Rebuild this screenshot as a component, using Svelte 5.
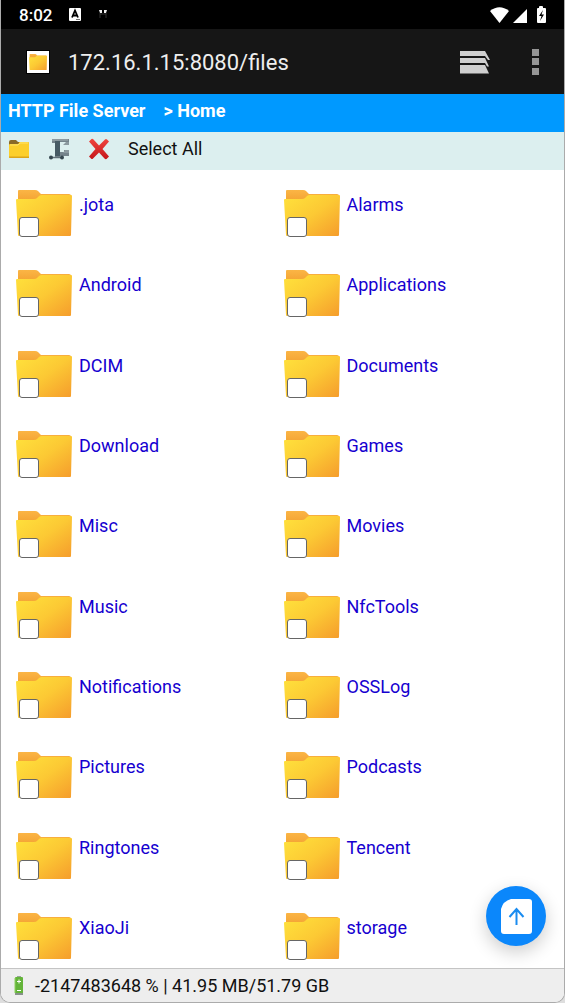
<script>
  const folders = [
    '.jota', 'Alarms', 'Android', 'Applications', 'DCIM', 'Documents', 'Download',
    'Games', 'Misc', 'Movies', 'Music', 'NfcTools', 'Notifications', 'OSSLog',
    'Pictures', 'Podcasts', 'Ringtones', 'Tencent', 'XiaoJi', 'storage'
  ];
  let selected = $state([]);

  function selectAll() {
    selected = selected.length === folders.length ? [] : [...folders];
  }
</script>

{#snippet folderShape()}
  <defs>
    <linearGradient id="folder-front" x1="0" y1="0" x2="1" y2="1">
      <stop offset="0" stop-color="#ffe23c" />
      <stop offset="0.5" stop-color="#fcc934" />
      <stop offset="1" stop-color="#f59c2c" />
    </linearGradient>
    <linearGradient id="folder-tab" x1="0" y1="0" x2="0" y2="1">
      <stop offset="0" stop-color="#fbb545" />
      <stop offset="1" stop-color="#f3a232" />
    </linearGradient>
  </defs>
  <path d="M2 1Q2 0 3 0H19Q21 0 22 1L25 4H53Q55 4 55 6V12H2Z" fill="url(#folder-tab)" />
  <path d="M0 10Q0 9 1 9H18Q20 9 21 8L23 6Q24 5 26 5H55Q56 5 56 6L55 45Q55 46 54 46H3Q2 46 2 45Z" fill="url(#folder-front)" />
{/snippet}

<div class="screen">
  <div class="status">
    <span class="clock">8:02</span>
    <svg class="app-a" width="12" height="13" viewBox="0 0 12 13">
      <rect width="12" height="13" rx="1" fill="#fff" />
      <path d="M3 9.500L6 2.500L9 9.500M4 7.500H8" fill="none" stroke="#000" stroke-width="1.800" />
      <path d="M7 11.500H11" stroke="#777" />
    </svg>
    <svg class="app-b" width="8" height="9" viewBox="0 0 8 9">
      <path d="M0 0H3V3H1ZM5 0H8L7 3H5Z" fill="#eee" />
      <path d="M1 3V8M7 3V8M1 4H7" stroke="#333" fill="none" />
    </svg>
    <svg class="signals" width="57" height="18" viewBox="0 0 57 18">
      <path d="M0 5Q9.500 -2.500 19 5L9.500 17Z" fill="#fff" />
      <path d="M37 3V17H23Z" fill="#fff" />
      <path d="M49 2V1Q49 0 50 0H52Q53 0 53 1V2H55Q56 2 56 3V16Q56 17 55 17H48Q47 17 47 16V3Q47 2 48 2Z" fill="#fff" />
      <path d="M53 4L49 10H51.500L50 15L54 8.500H51.500Z" fill="#000" />
    </svg>
  </div>

  <header class="browser">
    <span class="favicon">
      <svg width="18" height="16" viewBox="0 0 56 46" preserveAspectRatio="none">{@render folderShape()}</svg>
    </span>
    <span class="address">172.16.1.15:8080/files</span>
    <button class="bare" aria-label="Tabs">
      <svg width="30" height="24" viewBox="0 0 30 24">
        <path d="M0 1H25L30 10H28L25 6H0Z" fill="#cfcfcf" />
        <path d="M0 8H25L29 16.500H27L25 13H0Z" fill="#cfcfcf" />
        <path d="M0 15H25L29 23.500H0Z" fill="#cfcfcf" />
      </svg>
    </button>
    <button class="bare menu" aria-label="Menu">
      <svg width="7" height="26" viewBox="0 0 7 26" fill="#969696">
        <rect width="7" height="7" /><rect y="9" width="7" height="7" /><rect y="19" width="7" height="7" />
      </svg>
    </button>
  </header>

  <nav class="crumbs">
    <a href="#server">HTTP File Server</a>
    <a href="#home">&gt; Home</a>
  </nav>

  <div class="tools">
    <button class="bare" aria-label="New folder">
      <svg width="22" height="20" viewBox="0 0 22 20">
        <path d="M1 3Q1 1 3 1H8L10 3H19Q21 3 21 5V8H1Z" fill="#8b6a27" />
        <path d="M11 3H20V6H11Z" fill="#e9a91f" />
        <path d="M1 6Q1 5 2 5H10L12 3H20Q21 3 21 4V18Q21 19 20 19H2Q1 19 1 18Z" fill="#fccf2c" />
        <path d="M1 17.500H21V19H2Q1 19 1 18Z" fill="#dba51b" />
        <path d="M2 6H10L12 4H20" stroke="#ffe46a" fill="none" />
      </svg>
    </button>
    <button class="bare" aria-label="Compress">
      <svg width="22" height="22" viewBox="0 0 22 22">
        <path d="M4 1H21V5H18V4H12V14H16V12H21V18H12V19H7V5H4Z" fill="#74838b" />
        <path d="M15 7L18 4H21V7ZM15 15L17 12H21V15Z" fill="#8b999f" />
        <path d="M7 2H12V18H7Z" fill="#465a64" />
        <path d="M4 1H20V3H4Z" fill="#8b999f" />
        <path d="M3 19.500H14" stroke="#607078" stroke-width="1.500" />
        <circle cx="3" cy="19.500" r="2" fill="#35464f" />
        <circle cx="14" cy="19.500" r="2" fill="#35464f" />
      </svg>
    </button>
    <button class="bare" aria-label="Delete">
      <svg width="22" height="22" viewBox="0 0 22 22">
        <defs>
          <linearGradient id="cross" x1="0" y1="0" x2="0" y2="1">
            <stop offset="0" stop-color="#f0453f" /><stop offset="1" stop-color="#c4161a" />
          </linearGradient>
        </defs>
        <path d="M1 3.500L3.500 1Q4.500 0.500 5.500 1.500L11 7.500L17 1.500Q18 0.500 19 1.500L21 3.500L14.500 11L21 18.500L18.500 21Q17.500 21.500 16.500 20.500L11 14.500L5 20.500Q4 21.500 3 20.500L1 18.500L7.500 11Z" fill="url(#cross)" />
      </svg>
    </button>
    <button class="bare" onclick={selectAll}>Select All</button>
  </div>

  <main class="files">
    {#each folders as name, i}
      <div class="entry">
        <div class="thumb">
          <svg width="56" height="47" viewBox="0 0 56 47">{@render folderShape()}</svg>
          <input type="checkbox" value={name} bind:group={selected} aria-labelledby="name-{i}" />
        </div>
        <a id="name-{i}" href="#{name}">{name}</a>
      </div>
    {/each}
  </main>

  <footer>
    <svg width="10" height="19" viewBox="0 0 10 19">
      <path d="M3 0H7V2H3Z" fill="#9aa39a" />
      <rect x="1" y="1" width="8" height="17" rx="1" fill="#64b43a" />
      <path d="M1 2V17" stroke="#8fd25f" />
      <path d="M1 18H9" stroke="#87918a" stroke-width="2" />
      <path d="M3 5.500H7M5 3.500V7.500M3 14.500H7" stroke="#fff" />
    </svg>
    <span>-2147483648 % | 41.95 MB/51.79 GB</span>
  </footer>

  <button class="upload" aria-label="Upload">
    <svg width="31" height="35" viewBox="0 0 31 35">
      <path d="M10 0H28Q31 0 31 3V32Q31 35 28 35H3Q0 35 0 32V10Q2 2 10 0Z" fill="#fff" />
      <path d="M15.500 26V10M8.500 18L15.500 10L22.500 18" fill="none" stroke="#1a8cf0" stroke-width="2" />
    </svg>
  </button>
</div>

<style>
  :global(body) {
    background: #dedede;
  }
  .screen {
    box-sizing: border-box;
    min-height: 100vh;
    display: flex;
    flex-direction: column;
    border: 1px solid #ababab;
    border-top: 0;
    border-radius: 0 0 10px 10px;
    overflow: hidden;
    background: #fff;
    color: #111;
    font: 18px/24px Roboto, sans-serif;
  }
  a {
    text-decoration: none;
  }
  svg {
    display: block;
    flex: none;
  }
  .bare {
    padding: 0;
    border: 0;
    background: none;
    font: inherit;
    color: inherit;
    cursor: pointer;
  }
  .status {
    height: 29px;
    display: flex;
    align-items: center;
    padding: 0 17px 0 18px;
    background: #000;
    color: #fff;
  }
  .clock {
    font-weight: 500;
    font-size: 17px;
  }
  .app-a {
    margin-left: 17px;
  }
  .app-b {
    margin-left: 18px;
  }
  .signals {
    margin-left: auto;
  }
  .browser {
    height: 65px;
    display: flex;
    align-items: center;
    padding: 0 25px;
    background: #161616;
    color: #eee;
    font-size: 22px;
    line-height: 28px;
  }
  .favicon {
    width: 22px;
    height: 22px;
    display: grid;
    place-items: center;
    border: 1px solid #000;
    background: #fff;
  }
  .address {
    flex: 1;
    margin-left: 18px;
    padding-top: 2px;
  }
  .menu {
    margin-left: 42px;
  }
  .crumbs {
    height: 38px;
    box-sizing: border-box;
    display: flex;
    gap: 18px;
    padding: 5px 7px;
    background: #0099ff;
    font-weight: 700;
  }
  .crumbs a {
    color: #fff;
  }
  .tools {
    height: 38px;
    box-sizing: border-box;
    display: flex;
    align-items: center;
    gap: 18px;
    padding: 0 7px 4px;
    background: #dcefef;
  }
  .files {
    flex: 1;
    display: grid;
    grid-template-columns: 1fr 1fr;
    align-content: space-between;
    padding: 20px 13px 7px 15px;
  }
  .entry {
    display: flex;
    align-items: flex-start;
    gap: 7px;
    min-height: 48px;
  }
  .entry a {
    color: #1600d0;
    padding-top: 3px;
  }
  .thumb {
    position: relative;
  }
  .thumb input {
    appearance: none;
    box-sizing: border-box;
    position: absolute;
    left: 3px;
    bottom: 0;
    width: 20px;
    height: 20px;
    margin: 0;
    border: 1px solid #666;
    border-radius: 3px;
    background: #fff;
  }
  .thumb input:checked {
    background: #0075ff;
  }
  footer {
    height: 34px;
    box-sizing: border-box;
    display: flex;
    align-items: center;
    gap: 11px;
    padding: 0 13px;
    border-top: 1px solid #c4c4c4;
    background: #eee;
  }
  .upload {
    position: fixed;
    right: 19px;
    bottom: 57px;
    width: 60px;
    height: 60px;
    display: grid;
    place-items: center;
    padding: 0;
    border: 0;
    border-radius: 50%;
    background: #0b87fb;
    box-shadow: 0 6px 18px #0003;
  }
</style>
